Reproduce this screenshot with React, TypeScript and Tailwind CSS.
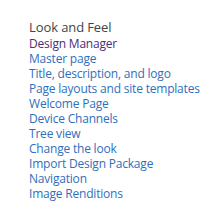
import React from 'react';

const LINKS = [
  'Master page',
  'Title, description, and logo',
  'Page layouts and site templates',
  'Welcome Page',
  'Device Channels',
  'Tree view',
  'Change the look',
  'Import Design Package',
  'Navigation',
  'Image Renditions',
];

export default function App() {
  return (
    <div className="w-[212px] h-[222px] bg-white pl-[29px] pt-[19px] overflow-hidden" style={{ fontFamily: '"Open Sans", "Noto Sans", sans-serif' }}>
      <h3 className="h-[17px] text-[13px] leading-[17px] tracking-[-0.1px] text-[#444444] font-normal whitespace-nowrap">Look and Feel</h3>
      <ul className="flex flex-col text-[12px] leading-[15px] tracking-[-0.2px] whitespace-nowrap">
        <li className="h-[15px]">
          <a href="#" className="block text-[#4b2d7a]">Design Manager</a>
        </li>
        {LINKS.map((l) => (
          <li key={l} className="h-[15px]">
            <a href="#" className="block text-[#2f6fbd]">{l}</a>
          </li>
        ))}
      </ul>
    </div>
  );
}
